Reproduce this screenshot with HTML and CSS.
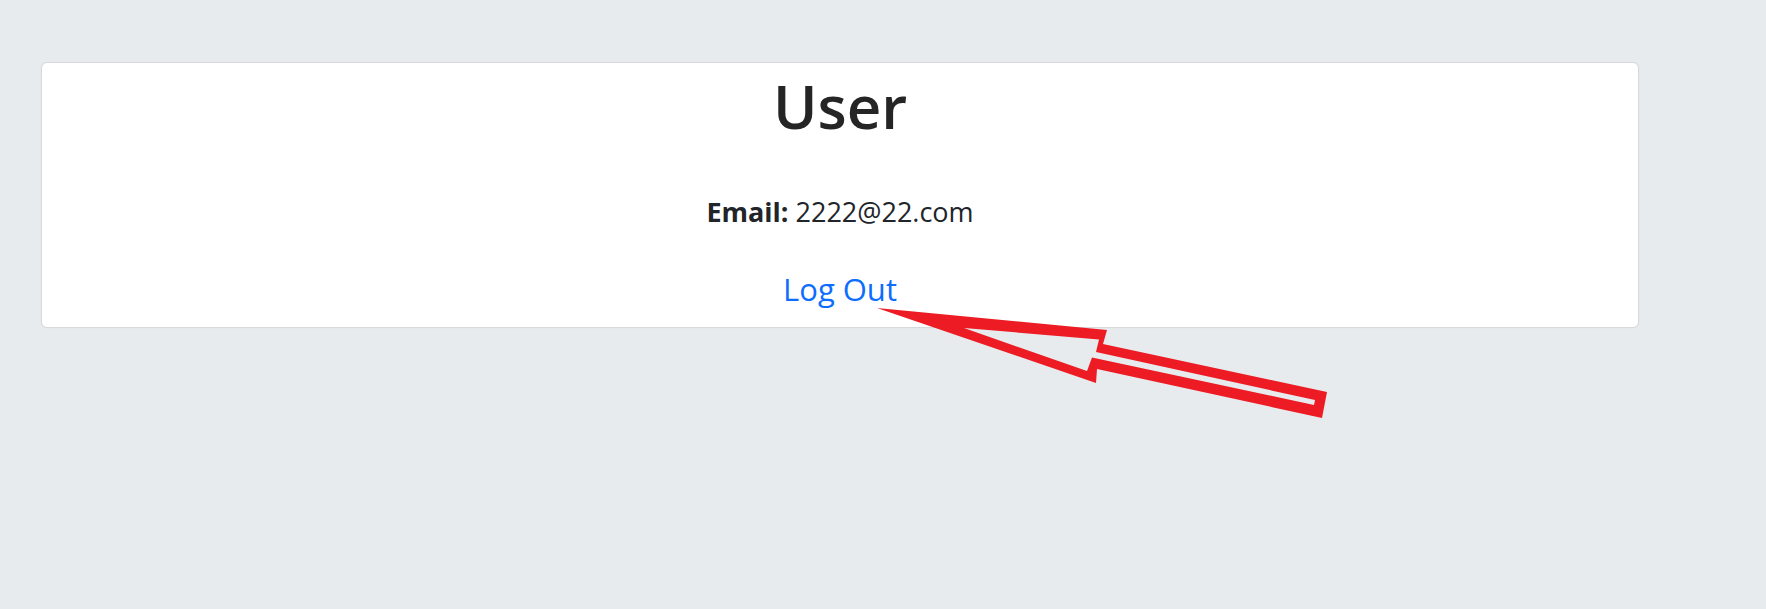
FILE: index.html
```html
<!DOCTYPE html>
<html lang="en">
<head>
<meta charset="utf-8">
<title>User</title>
<link rel="stylesheet" href="styles.css">
</head>
<body>
<div class="page">
  <section class="card">
    <h1 class="title">User</h1>
    <p class="email"><strong>Email:</strong> 2222@22.com</p>
    <a class="logout" href="#">Log Out</a>
  </section>
</div>
<svg class="annotation" width="1766" height="609" viewBox="0 0 1766 609" xmlns="http://www.w3.org/2000/svg">
  <path fill="#ed1c24" fill-rule="evenodd" d="M877 308 L1107 330 L1103 344 L1327 392 L1322 418 L1097 369 L1096 383 Z M964 328 L1099 339.5 L1096 352 L1315 400 L1314 405 L1092 357.5 L1087 371 Z"/>
</svg>
</body>
</html>
```
FILE: styles.css
```css
html, body {
  margin: 0;
  padding: 0;
}
body {
  background: #e8ebee;
  font-family: "Open Sans", "Noto Sans", sans-serif;
  color: #212529;
  width: 1766px;
  height: 609px;
  overflow: hidden;
  position: relative;
}
.page {
  padding: 62px 0 0 41px;
}
.card {
  box-sizing: border-box;
  width: 1598px;
  height: 266px;
  background: #ffffff;
  border: 1px solid #d7d9dc;
  border-radius: 6px;
  box-shadow: 0 0 1px rgba(0, 0, 0, 0.08);
  display: flex;
  flex-direction: column;
  align-items: center;
}
.title {
  margin: 6px 0 0;
  font-size: 60px;
  line-height: 74px;
  font-weight: 600;
  color: #252525;
}
.email {
  margin: 48px 0 0;
  font-size: 27px;
  line-height: 42px;
  color: #212529;
}
.email strong {
  font-weight: 700;
}
.logout {
  margin-top: 32px;
  font-size: 31px;
  line-height: 48px;
  color: #0d6efd;
  text-decoration: none;
}
.annotation {
  position: absolute;
  left: 0;
  top: 0;
  pointer-events: none;
}
```
